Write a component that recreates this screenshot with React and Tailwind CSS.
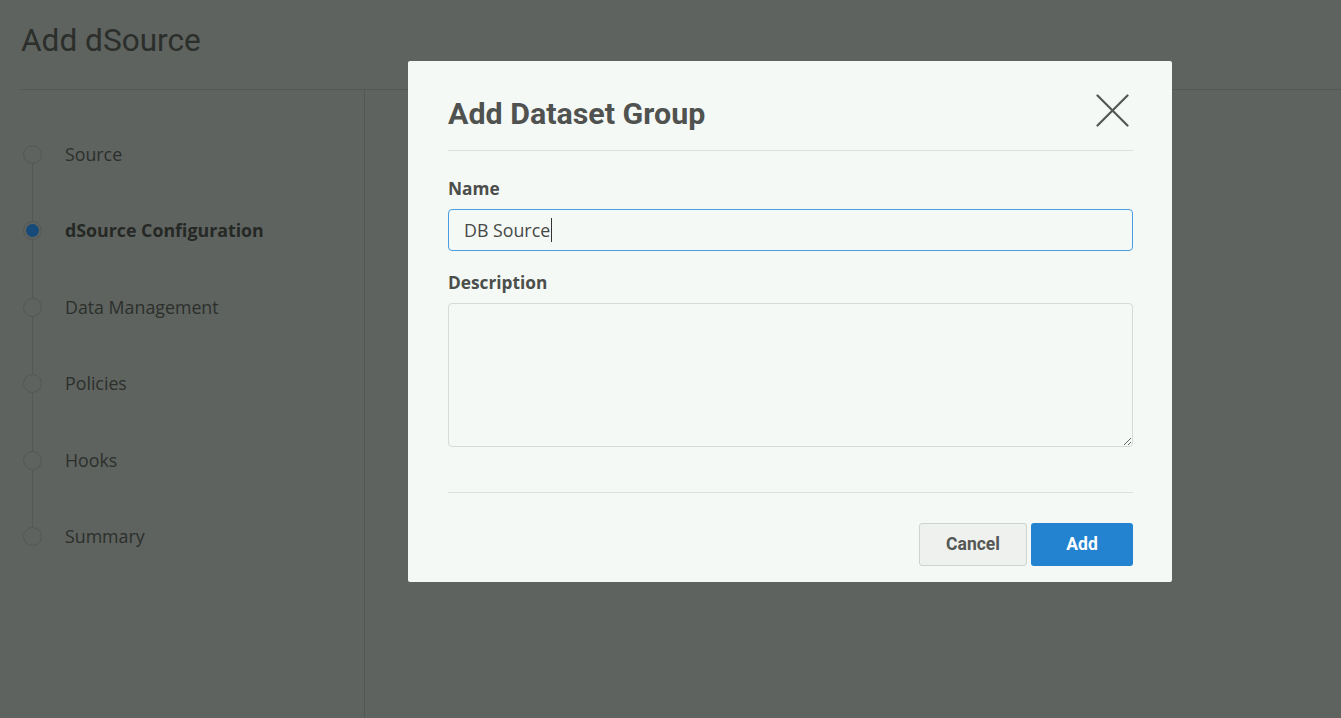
import React from "react";

const steps = [
  { label: "Source" },
  { label: "dSource Configuration", active: true },
  { label: "Data Management" },
  { label: "Policies" },
  { label: "Hooks" },
  { label: "Summary" },
];

const CloseIcon = () => (
  <svg width="33" height="33" viewBox="0 0 33 33" fill="none">
    <path d="M1.5 1.5L31.5 31.5M31.5 1.5L1.5 31.5" stroke="#545754" strokeWidth="2.2" strokeLinecap="round" />
  </svg>
);

export default function App() {
  return (
    <div className="relative w-[1341px] h-[718px] overflow-hidden bg-[#5e635f] font-['Open_Sans',sans-serif]">
      {/* page under the backdrop */}
      <div className="flex flex-col h-full">
        <div className="h-[90px] ml-[21px] border-b border-[#535853] flex items-center">
          <h1 className="font-['Roboto',sans-serif] text-[31.6px] text-[#2b2e2b] leading-none -mt-[8px]">
            Add dSource
          </h1>
        </div>
        <div className="flex flex-1">
          <div className="w-[365px] border-r border-[#535853] pt-[26px] pl-[23px]">
            <ul className="relative">
              <div className="absolute left-[9px] top-[47px] bottom-[47px] w-px bg-[#535853]" />
              {steps.map((s) => (
                <li key={s.label} className="relative h-[76.5px] flex items-center gap-[23px]">
                  <span className="w-[19px] h-[19px] rounded-full border border-[#535853] bg-[#5e635f] flex items-center justify-center shrink-0">
                    {s.active && <span className="w-[13px] h-[13px] rounded-full bg-[#164a78]" />}
                  </span>
                  <span
                    className={
                      s.active
                        ? "text-[17.8px] font-bold text-[#252825]"
                        : "text-[17.8px] text-[#2c2f2c]"
                    }
                  >
                    {s.label}
                  </span>
                </li>
              ))}
            </ul>
          </div>
          <div className="flex-1" />
        </div>
      </div>

      {/* modal */}
      <div className="absolute left-[408px] top-[61px] w-[764px] h-[521px] bg-[#f5f9f6] rounded-[2px] pl-[40px] pr-[39px] flex flex-col">
        <div className="h-[90px] pt-[17px] flex items-center justify-between border-b border-[#dcdfdc]">
          <h2 className="font-['Roboto',sans-serif] font-bold text-[30.4px] text-[#4f524f]">Add Dataset Group</h2>
          <button className="mr-[4px] -mt-[7px]">
            <CloseIcon />
          </button>
        </div>

        <label className="mt-[27px] text-[17.3px] leading-[22px] font-bold text-[#4b4e4b]">Name</label>
        <div className="mt-[9px] h-[42px] border border-[#4a9de0] rounded-[4px] flex items-center pl-[15px] text-[17.8px] text-[#454845]">
          DB Source
          <span className="ml-px w-px h-[24px] bg-[#333]" />
        </div>

        <label className="mt-[21px] text-[17.3px] leading-[22px] font-bold text-[#4b4e4b]">Description</label>
        <textarea className="mt-[9px] h-[144px] border border-[#d7dad7] rounded-[4px] bg-transparent outline-none" />

        <div className="mt-[45px] border-t border-[#dcdfdc]" />

        <div className="mt-[30px] flex justify-end gap-[4px]">
          <button className="w-[108px] h-[43px] rounded-[3px] border border-[#cfd3cf] bg-[#eef1ee] font-['Roboto',sans-serif] font-bold text-[17.5px] text-[#545754]">
            Cancel
          </button>
          <button className="w-[102px] h-[43px] rounded-[3px] bg-[#2383d1] font-['Roboto',sans-serif] font-bold text-[17.5px] text-white">
            Add
          </button>
        </div>
      </div>
    </div>
  );
}
